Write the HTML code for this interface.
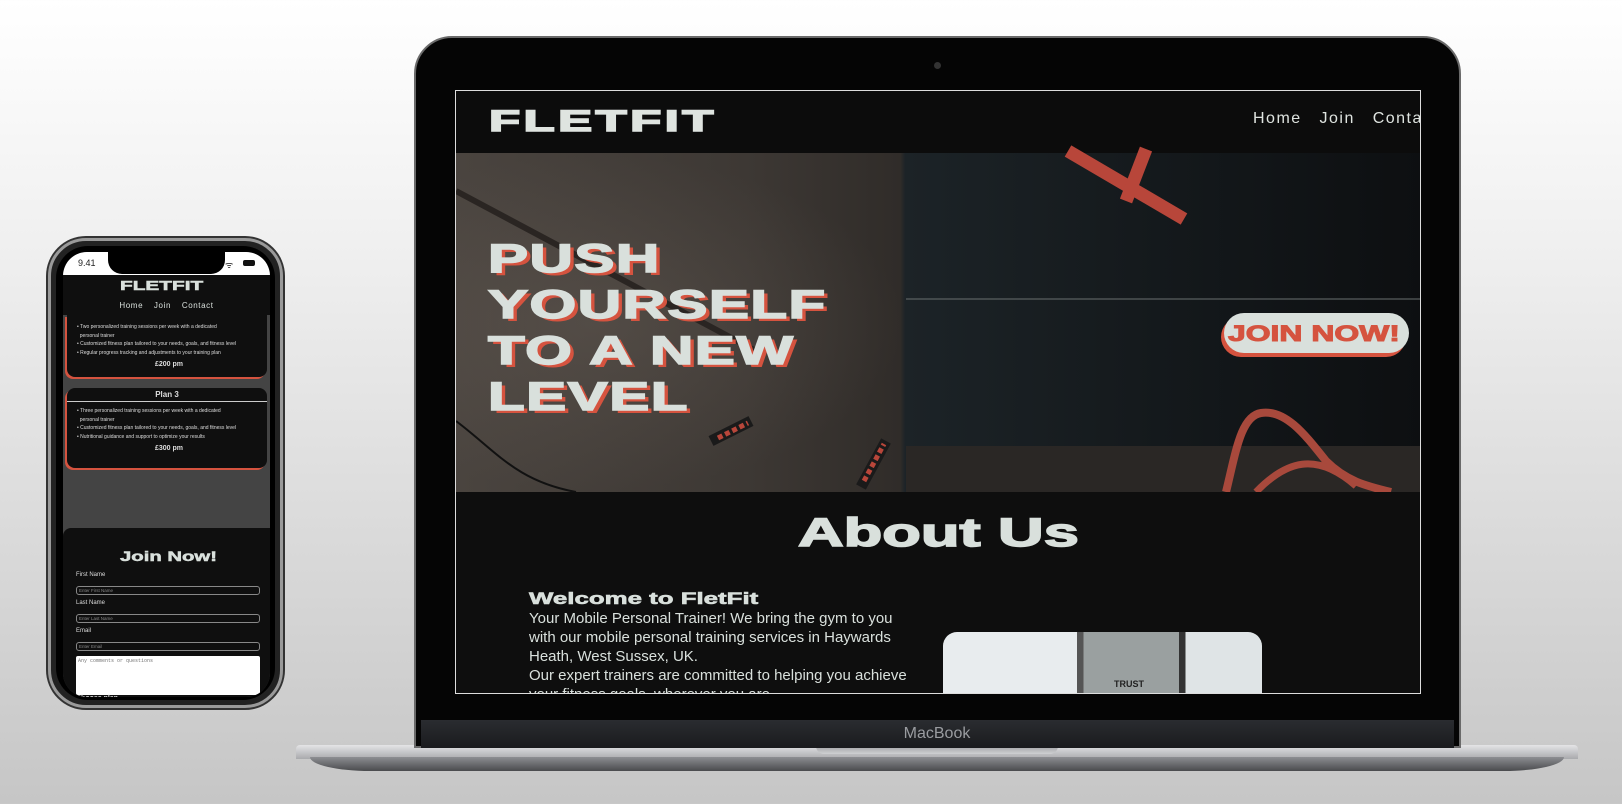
<!DOCTYPE html>
<html><head><meta charset="utf-8"><style>
*{margin:0;padding:0;box-sizing:border-box}
body{width:1622px;height:804px;overflow:hidden;position:relative;font-family:"Liberation Sans",sans-serif;background:linear-gradient(180deg,#ffffff 0%,#f0f0f0 30%,#d8d8d8 70%,#c6c6c6 100%)}
.abs{position:absolute}
.wide{font-weight:bold;transform-origin:left top;white-space:nowrap}
</style></head><body>

<!-- Laptop base -->
<div class="abs" style="left:296px;top:745px;width:1282px;height:14px;background:linear-gradient(180deg,#e4e4e6,#a9aaad);border-radius:4px 4px 0 0"></div>
<div class="abs" style="left:310px;top:757px;width:1254px;height:14px;background:linear-gradient(180deg,#8d8e92,#4a4b4e);border-radius:0 0 60px 60px/0 0 14px 14px"></div>
<div class="abs" style="left:816px;top:745px;width:242px;height:9px;background:linear-gradient(180deg,#9c9da0,#cfd0d2);border-radius:0 0 8px 8px"></div>

<!-- Laptop lid -->
<div class="abs" style="left:414px;top:36px;width:1047px;height:712px;background:#050505;border-radius:38px 38px 0 0;border:2px solid #6a6a6a"></div>
<div class="abs" style="left:421px;top:720px;width:1033px;height:28px;background:linear-gradient(180deg,#2a2c30,#1a1b1e)"></div>
<div class="abs" style="left:0;top:725px;width:1874px;text-align:center;color:#9a9ca0;font-size:16px">MacBook</div>
<div class="abs" style="left:934px;top:62px;width:7px;height:7px;border-radius:50%;background:#333"></div>

<!-- Screen -->
<div class="abs" style="left:455px;top:90px;width:966px;height:604px;background:#0e0e0e;overflow:hidden;border:1px solid #ddd">
  <div class="abs" style="left:0;top:0;width:966px;height:62px;background:#0c0c0c"></div>
  <div class="abs wide" style="left:33px;top:14px;font-size:30px;color:#dfe4e0;transform:scaleX(1.7);letter-spacing:2px;-webkit-text-stroke:1.5px #dfe4e0">FLETFIT</div>
  <div class="abs" style="left:797px;top:19px;font-size:16px;color:#dfe4e0;letter-spacing:1.5px;white-space:nowrap">Home&nbsp;&nbsp;&nbsp;Join&nbsp;&nbsp;&nbsp;Contact</div>

  <!-- hero -->
  <div class="abs" style="left:0;top:62px;width:966px;height:339px;background:linear-gradient(90deg,#4a443f 0%,#3d3834 30%,#302c29 46%,#1c2327 46.5%,#151a1d 70%,#0d0f11 100%)"></div>
  <div class="abs" style="left:0;top:62px;width:450px;height:339px;background:radial-gradient(ellipse at 30% 50%,rgba(110,100,92,.35),transparent 70%)"></div>
  <div class="abs" style="left:450px;top:355px;width:516px;height:46px;background:#2a2725"></div>
  <div class="abs" style="left:450px;top:207px;width:516px;height:2px;background:#6a7070;opacity:.5"></div>
  <svg class="abs" style="left:0;top:0" width="966" height="401">
    <line x1="0" y1="100" x2="300" y2="260" stroke="#2a2522" stroke-width="6"/>
    <line x1="612" y1="60" x2="728" y2="128" stroke="#b8463a" stroke-width="13"/>
    <line x1="690" y1="58" x2="670" y2="110" stroke="#b8463a" stroke-width="13"/>
    <path d="M770 401 C 780 360, 785 325, 805 322 C 830 318, 850 345, 870 370 C 890 390, 910 395, 935 401" fill="none" stroke="#a8493c" stroke-width="8"/>
    <path d="M800 401 C 830 370, 860 360, 900 395" fill="none" stroke="#a8493c" stroke-width="7"/>
    <line x1="255" y1="350" x2="295" y2="330" stroke="#1a1a1a" stroke-width="11"/>
    <line x1="262" y1="347" x2="292" y2="332" stroke="#b8463a" stroke-width="5" stroke-dasharray="5 3"/>
    <line x1="405" y1="396" x2="430" y2="350" stroke="#1a1a1a" stroke-width="11"/>
    <line x1="408" y1="390" x2="428" y2="353" stroke="#b8463a" stroke-width="5" stroke-dasharray="5 3"/>
    <path d="M0 330 C 40 360, 60 390, 120 401" fill="none" stroke="#111" stroke-width="2"/>
  </svg>

  <div class="abs wide" style="left:32px;top:145px;font-size:40px;line-height:46px;color:#d9e0dc;transform:scaleX(1.5);letter-spacing:1px;-webkit-text-stroke:1.5px #d9e0dc;text-shadow:3px 3px 0 #d5533f">PUSH<br>YOURSELF<br>TO A NEW<br>LEVEL</div>
  <div class="abs" style="left:768px;top:222px;width:185px;height:40px;border-radius:20px;background:#d9e0dc;box-shadow:-3px 4px 0 #d5533f"></div>
  <div class="abs wide" style="left:772px;top:230px;font-size:22px;color:#d5533f;transform:scaleX(1.45);-webkit-text-stroke:1px #d5533f">JOIN NOW!</div>

  <!-- about -->
  <div class="abs wide" style="left:342px;top:420px;font-size:40px;color:#d9e0dc;transform:scaleX(1.58);-webkit-text-stroke:1.5px #d9e0dc">About Us</div>
  <div class="abs wide" style="left:73px;top:498px;font-size:17px;color:#d9e0dc;transform:scaleX(1.52);-webkit-text-stroke:.6px #d9e0dc">Welcome to FletFit</div>
  <div class="abs" style="left:73px;top:518px;width:380px;font-size:15px;line-height:19px;color:#d9e0dc">Your Mobile Personal Trainer! We bring the gym to you with our mobile personal training services in Haywards Heath, West Sussex, UK.<br>Our expert trainers are committed to helping you achieve your fitness goals, wherever you are.</div>
  <div class="abs" style="left:487px;top:541px;width:319px;height:80px;border-radius:14px;background:linear-gradient(90deg,#e8ecee 0,#e8ecee 42%,#555 42%,#555 44%,#9aa0a0 44%,#9aa0a0 74%,#333 74%,#333 76%,#dfe4e6 76%);overflow:hidden"></div>
  <div class="abs" style="left:658px;top:588px;font-size:9px;font-weight:bold;color:#222">TRUST</div>
</div>

<!-- Phone -->
<div class="abs" style="left:48px;top:238px;width:235px;height:470px;border-radius:38px;background:#222;border:3px solid #9a9a9a;box-shadow:0 0 0 2px #333"></div>
<div class="abs" style="left:56px;top:246px;width:219px;height:454px;border-radius:32px;background:#000"></div>
<div class="abs" style="left:63px;top:252px;width:207px;height:445px;border-radius:24px;overflow:hidden;background:#444">
  <div class="abs" style="left:0;top:0;width:207px;height:23px;background:#fff"></div>
  <div class="abs" style="left:15px;top:6px;font-size:9px;color:#222">9.41</div>
  <div class="abs" style="left:180px;top:8px;width:12px;height:6px;border:1px solid #111;border-radius:2px;background:#111"></div>
  <div class="abs" style="left:162px;top:6px;font-size:9px;color:#111">ᯤ</div>
  <div class="abs" style="left:45px;top:-2px;width:117px;height:24px;background:#000;border-radius:0 0 14px 14px"></div>
  <div class="abs" style="left:0;top:23px;width:207px;height:40px;background:#0f0f0f"></div>
  <div class="abs wide" style="left:57px;top:26px;font-size:13px;color:#d9e0dc;transform:scaleX(1.6);-webkit-text-stroke:.5px #d9e0dc">FLETFIT</div>
  <div class="abs" style="left:0;top:49px;width:207px;text-align:center;font-size:8px;color:#d9e0dc;letter-spacing:.6px;word-spacing:8px">Home Join Contact</div>
  <div class="abs" style="left:4px;top:63px;width:200px;height:62px;background:#0f0f0f;border-radius:0 0 8px 8px;box-shadow:-2px 2px 0 #d5533f;font-size:5px;color:#ddd;padding:8px 6px 0 10px;line-height:8.5px">• Two personalized training sessions per week with a dedicated<br>&nbsp;&nbsp;personal trainer<br>• Customized fitness plan tailored to your needs, goals, and fitness level<br>• Regular progress tracking and adjustments to your training plan<div style="text-align:center;font-weight:bold;font-size:7px;margin-top:4px">£200 pm</div></div>
  <div class="abs" style="left:4px;top:136px;width:200px;height:80px;background:#0f0f0f;border-radius:8px;box-shadow:-2px 2px 0 #d5533f;font-size:5px;color:#ddd;line-height:8.5px">
    <div style="text-align:center;font-weight:bold;font-size:8px;line-height:13px;border-bottom:1px solid #ccc">Plan 3</div>
    <div style="padding:5px 6px 0 10px">• Three personalized training sessions per week with a dedicated<br>&nbsp;&nbsp;personal trainer<br>• Customized fitness plan tailored to your needs, goals, and fitness level<br>• Nutritional guidance and support to optimize your results<div style="text-align:center;font-weight:bold;font-size:7px;margin-top:4px">£300 pm</div></div>
  </div>
  <div class="abs" style="left:0;top:276px;width:207px;height:180px;background:#0f0f0f;border-radius:8px 0 0 0"></div>
  <div class="abs wide" style="left:57px;top:296px;font-size:14px;color:#d9e0dc;transform:scaleX(1.45);-webkit-text-stroke:.5px #d9e0dc">Join Now!</div>
  <div class="abs" style="left:13px;top:320px;font-size:6px;color:#ddd">First Name</div>
  <div class="abs" style="left:13px;top:334px;width:184px;height:9px;border:1px solid #888;border-radius:3px;font-size:4.5px;color:#888;padding:1px 2px">Enter First Name</div>
  <div class="abs" style="left:13px;top:348px;font-size:6px;color:#ddd">Last Name</div>
  <div class="abs" style="left:13px;top:362px;width:184px;height:9px;border:1px solid #888;border-radius:3px;font-size:4.5px;color:#888;padding:1px 2px">Enter Last Name</div>
  <div class="abs" style="left:13px;top:376px;font-size:6px;color:#ddd">Email</div>
  <div class="abs" style="left:13px;top:390px;width:184px;height:9px;border:1px solid #888;border-radius:3px;font-size:4.5px;color:#888;padding:1px 2px">Enter Email</div>
  <div class="abs" style="left:13px;top:404px;width:184px;height:39px;background:#fff;border-radius:2px;font-family:'Liberation Mono',monospace;font-size:5px;color:#777;padding:2px">Any comments or questions</div>
  <div class="abs" style="left:13px;top:443px;font-size:7px;font-weight:bold;color:#ddd">Choose plan</div>
</div>
</body></html>
